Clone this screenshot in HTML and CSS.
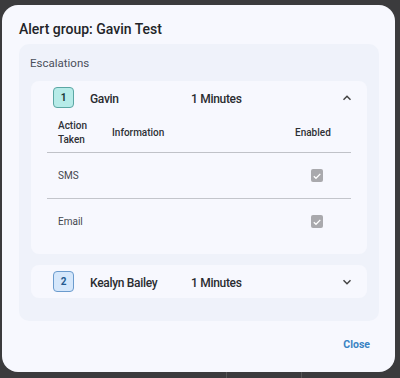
FILE: index.html
```html
<!DOCTYPE html>
<html>
<head>
<meta charset="utf-8">
<link rel="stylesheet" href="styles.css">
</head>
<body>
<div class="backdrop">
  <div class="behind"><span class="chip">2 Escalations</span></div>
  <div class="modal">
    <h2 class="title">Alert group: Gavin Test</h2>
    <section class="section">
      <div class="section-label">Escalations</div>
      <div class="card">
        <div class="card-head">
          <span class="badge badge-teal">1</span>
          <span class="name">Gavin</span>
          <span class="delay">1 Minutes</span>
          <svg class="chev" viewBox="0 0 16 16" width="16" height="16"><path d="M4.5 9.8 L8 6.3 L11.5 9.8" fill="none" stroke="#444" stroke-width="1.5"/></svg>
        </div>
        <div class="table">
          <div class="row head">
            <div class="c1">Action<br>Taken</div>
            <div class="c2">Information</div>
            <div class="c3">Enabled</div>
          </div>
          <div class="row">
            <div class="c1">SMS</div>
            <div class="c2"></div>
            <div class="c3"><span class="check"><svg viewBox="0 0 12 12" width="12" height="12"><path d="M2.8 6.2 L5 8.3 L9.3 3.9" fill="none" stroke="#fff" stroke-width="1.3"/></svg></span></div>
          </div>
          <div class="row last">
            <div class="c1">Email</div>
            <div class="c2"></div>
            <div class="c3"><span class="check"><svg viewBox="0 0 12 12" width="12" height="12"><path d="M2.8 6.2 L5 8.3 L9.3 3.9" fill="none" stroke="#fff" stroke-width="1.3"/></svg></span></div>
          </div>
        </div>
      </div>
      <div class="card">
        <div class="card-head">
          <span class="badge badge-blue">2</span>
          <span class="name">Kealyn Bailey</span>
          <span class="delay">1 Minutes</span>
          <svg class="chev" viewBox="0 0 16 16" width="16" height="16"><path d="M4.5 6.3 L8 9.8 L11.5 6.3" fill="none" stroke="#444" stroke-width="1.5"/></svg>
        </div>
      </div>
    </section>
    <div class="footer"><button class="close">Close</button></div>
  </div>
</div>
</body>
</html>
```

FILE: styles.css
```css
* { box-sizing: border-box; }
html, body { margin: 0; padding: 0; }
body {
  width: 400px;
  height: 378px;
  overflow: hidden;
  background: #3b3b3d;
  font-family: Roboto, "Liberation Sans", sans-serif;
  color: #2a2c30;
}
.backdrop { position: relative; width: 400px; height: 378px; overflow: hidden; }
.behind {
  position: absolute;
  left: 226px;
  top: 370px;
  width: 76px;
  height: 20px;
  border-left: 1px solid #555;
  border-right: 1px solid #555;
  padding: 3px 0 0 8px;
}
.chip { color: #9a9a9a; font-size: 12px; font-weight: 500; }
.modal {
  position: absolute;
  left: 2px;
  top: 5px;
  width: 393px;
  height: 367px;
  background: #f7f8fe;
  border-radius: 16px;
  padding: 14px 16px 0 17px;
  display: flex;
  flex-direction: column;
}
.title {
  margin: 0 0 5px 0;
  font-size: 14px;
  line-height: 20px;
  font-weight: 500;
  color: #222428;
}
.section {
  background: #eff2fa;
  border-radius: 10px;
  padding: 11px 12px 23px 12px;
}
.section-label {
  font-size: 11.5px;
  line-height: 16px;
  color: #4a4f5a;
  margin: 0 0 10px -1px;
}
.card {
  background: #f7f8fe;
  border-radius: 8px;
  margin-bottom: 11px;
}
.card:last-child { margin-bottom: 0; }
.card-head {
  display: flex;
  align-items: center;
  height: 33px;
  padding: 0 12px 0 22px;
}
.badge {
  width: 21px;
  height: 21px;
  border-radius: 4px;
  display: flex;
  align-items: center;
  justify-content: center;
  font-size: 10px;
  font-weight: 700;
}
.badge-teal { background: #b6ebe8; border: 1px solid #5ba7a4; color: #1b3a3a; }
.badge-blue { background: #d5e7fb; border: 1px solid #6b9bcd; color: #245b90; }
.name {
  margin-left: 16px;
  width: 101px;
  padding-top: 3px;
  font-size: 12px;
  letter-spacing: -0.3px;
  font-weight: 500;
  color: #2a2c30;
}
.delay {
  padding-top: 3px;
  font-size: 12px;
  letter-spacing: -0.3px;
  font-weight: 500;
  color: #2a2c30;
  flex: 1;
}
.chev { display: block; }
.table { padding: 0 16px 10px 16px; }
.row {
  display: grid;
  grid-template-columns: 54px 183px 1fr;
  align-items: center;
  height: 46px;
  border-bottom: 1px solid #c3c5cb;
  font-size: 10px;
  color: #44474d;
}
.row.last { border-bottom: none; height: 45px; }
.row.head {
  height: auto;
  padding: 5px 0 6px 0;
  font-weight: 500;
  color: #2e3035;
  line-height: 13.5px;
  border-bottom: 1.5px solid #c0c2c8;
}
.row > div { padding-left: 11px; }
.check {
  display: flex;
  width: 12px;
  height: 13px;
  margin-left: 16px;
  background: #a9a9ad;
  border-radius: 2px;
  align-items: center;
  justify-content: center;
}
.footer {
  display: flex;
  justify-content: flex-end;
  margin-top: 14px;
  padding-right: 3px;
}
.close {
  background: none;
  border: none;
  font-family: Roboto, "Liberation Sans", sans-serif;
  font-size: 10.5px;
  font-weight: 700;
  color: #3a83c3;
  padding: 4px 6px;
  line-height: 12px;
}
```
